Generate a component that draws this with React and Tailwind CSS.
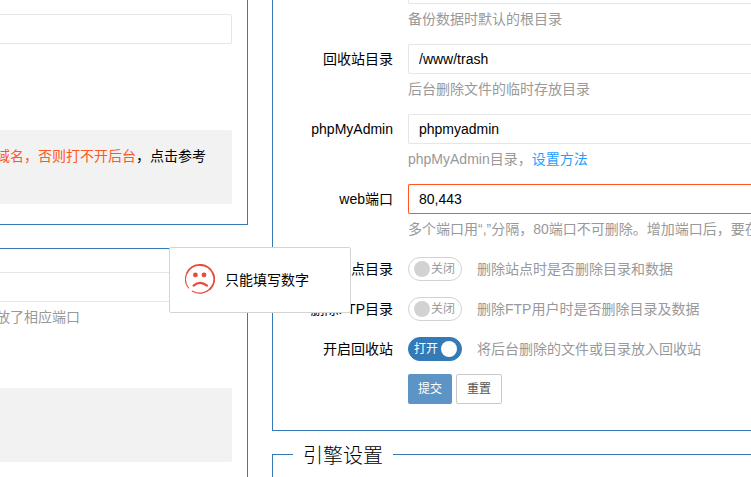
import { useState } from "react";

export default function App() {
  const [tip, setTip] = useState("只能填写数字");

  return (
    <div className="relative flex min-h-screen gap-6 overflow-hidden bg-white font-['Liberation_Sans','Noto_Sans_CJK_SC',sans-serif] text-sm text-black">
      <SideColumn />

      <main className="flex min-w-0 flex-1 flex-col">
        <form
          onSubmit={(e) => e.preventDefault()}
          className="-mt-[26px] border-b border-l border-[#337ab7] pb-[26px]"
        >
          <div className="flex flex-col gap-[10px]">
            <TextRow id="backup" ariaLabel="备份目录" hint="备份数据时默认的根目录" />
            <TextRow id="trash" label="回收站目录" value="/www/trash" hint="后台删除文件的临时存放目录" />
            <TextRow
              id="pma"
              label="phpMyAdmin"
              value="phpmyadmin"
              hint={
                <>
                  phpMyAdmin目录，
                  <a href="#help" className="text-[#1e9fff]">设置方法</a>
                </>
              }
            />
            <TextRow
              id="port"
              label="web端口"
              value="80,443"
              invalid
              onEdit={() => setTip("")}
              hint="多个端口用“,”分隔，80端口不可删除。增加端口后，要在"
            />
            <SwitchRow id="del-site" label="删除站点目录" hint="删除站点时是否删除目录和数据" />
            <SwitchRow id="del-ftp" label="删除FTP目录" hint="删除FTP用户时是否删除目录及数据" />
            <SwitchRow id="recycle" label="开启回收站" hint="将后台删除的文件或目录放入回收站" on />
            <div className="ml-[135px] flex gap-1 text-xs">
              <button type="submit" className="h-[30px] w-11 rounded-xs bg-[#5c95c5] text-white">
                提交
              </button>
              <button
                type="reset"
                className="h-[30px] w-[46px] rounded-xs border border-[#c9c9c9] bg-white text-[#555]"
              >
                重置
              </button>
            </div>
          </div>
        </form>

        <fieldset className="mt-2 flex-1 border-t border-l border-[#337ab7]">
          <legend className="ml-5 px-[10px] pt-1 text-xl leading-[26px] font-light">引擎设置</legend>
        </fieldset>
      </main>

      {tip && <Toast text={tip} />}
    </div>
  );
}

function SideColumn() {
  return (
    <aside className="flex w-62 shrink-0 flex-col whitespace-nowrap">
      <section className="border-r border-b border-[#337ab7] pt-[14px] pr-[15px] pb-5">
        <input
          aria-label="域名"
          className="block h-[30px] w-full rounded-r-xs border border-l-0 border-[#e6e6e6] px-[10px]"
        />
        <div className="mt-[86px] h-[74px] rounded-r-xs bg-[#f2f2f2] py-[11px]">
          <p className="-ml-1 leading-[30px]">
            <span className="text-[#ff5722]">域名，否则打不开后台</span>，
            <a href="#reference">点击参考</a>
          </p>
        </div>
      </section>

      <section className="mt-[23px] flex-1 border-t border-r border-[#337ab7] pt-[23px] pr-[15px]">
        <input
          aria-label="端口"
          className="block h-[30px] w-full rounded-r-xs border border-l-0 border-[#e6e6e6] px-[10px]"
        />
        <p className="-ml-1 leading-[30px] text-[#999]">放了相应端口</p>
        <div className="mt-14 h-[74px] rounded-r-xs bg-[#f2f2f2]" />
      </section>
    </aside>
  );
}

function TextRow({ id, label, ariaLabel, value, hint, invalid, onEdit }) {
  return (
    <div className="flex gap-[15px] leading-[30px] whitespace-nowrap">
      <label htmlFor={id} className="w-30 shrink-0 text-right">
        {label}
      </label>
      <div className="min-w-0 flex-1">
        <input
          id={id}
          aria-label={ariaLabel}
          defaultValue={value}
          onChange={onEdit}
          className={`block h-[30px] w-full rounded-l-xs border border-r-0 px-[10px] outline-none ${
            invalid ? "border-[#ff5722]" : "border-[#e6e6e6]"
          }`}
        />
        <p className="text-[#999]">{hint}</p>
      </div>
    </div>
  );
}

function SwitchRow({ id, label, hint, on = false }) {
  const [checked, setChecked] = useState(on);

  return (
    <div className="flex items-center gap-[15px] leading-[30px] whitespace-nowrap">
      <label htmlFor={id} className="w-30 shrink-0 text-right">
        {label}
      </label>
      <label
        className={`flex h-6 w-[54px] shrink-0 cursor-pointer items-center gap-px rounded-full border pr-1 pl-[5px] text-xs ${
          checked
            ? "flex-row-reverse justify-between border-[#337ab7] bg-[#337ab7] text-white"
            : "border-[#d2d2d2] bg-white text-[#999]"
        }`}
      >
        <input
          id={id}
          type="checkbox"
          checked={checked}
          onChange={(e) => setChecked(e.target.checked)}
          className="sr-only"
        />
        <span className={`size-4 rounded-full ${checked ? "bg-white" : "bg-[#d2d2d2]"}`} />
        <span>{checked ? "打开" : "关闭"}</span>
      </label>
      <span className="text-[#999]">{hint}</span>
    </div>
  );
}

function Toast({ text }) {
  return (
    <div
      role="alert"
      className="absolute top-[247px] left-[169px] flex h-[66px] w-[182px] items-start gap-[10px] rounded-xs border border-[#d3d4d3] bg-white pt-4 pl-[15px]"
    >
      <svg viewBox="0 0 30 30" className="size-[30px] shrink-0" fill="none" stroke="#e64c3c" strokeLinecap="round">
        <path d="M3.6 24A14.3 14.3 0 0 1 2 9" strokeWidth="1.1" />
        <path d="M2 9A14.3 14.3 0 0 1 15 .9" strokeWidth="1.7" />
        <path d="M15 .9A14.1 14.1 0 0 1 25 25" strokeWidth="2" />
        <path d="M25 25A14.3 14.3 0 0 1 7.6 27.2" strokeWidth="1.3" />
        <circle cx="10.4" cy="10.9" r="2.4" fill="#e64c3c" stroke="none" />
        <circle cx="19" cy="10.9" r="2.4" fill="#e64c3c" stroke="none" />
        <path d="M8.6 21.6Q15 16 22 21.6" strokeWidth="2.2" />
      </svg>
      <span className="leading-8">{text}</span>
    </div>
  );
}
